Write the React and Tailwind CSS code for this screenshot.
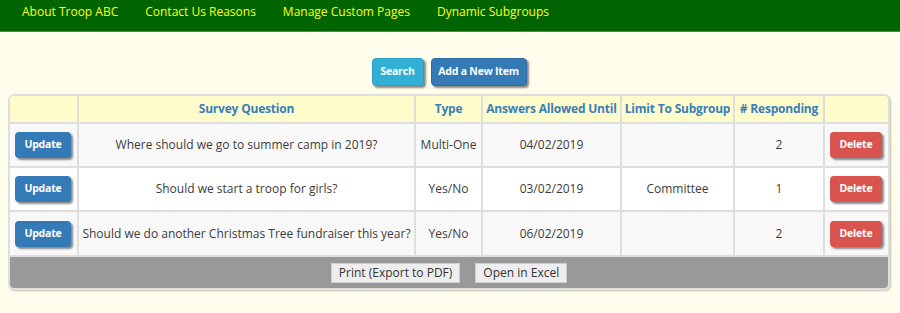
import React from "react";

const navLinks = ["About Troop ABC", "Contact Us Reasons", "Manage Custom Pages", "Dynamic Subgroups"];

const surveys = [
  { id: 1, question: "Where should we go to summer camp in 2019?", type: "Multi-One", until: "04/02/2019", subgroup: "", responding: 2 },
  { id: 2, question: "Should we start a troop for girls?", type: "Yes/No", until: "03/02/2019", subgroup: "Committee", responding: 1 },
  { id: 3, question: "Should we do another Christmas Tree fundraiser this year?", type: "Yes/No", until: "06/02/2019", subgroup: "", responding: 2 },
];

const font = { fontFamily: '"Open Sans", "Noto Sans", sans-serif' };

function SmallButton({ color, children, className = "" }) {
  return (
    <button
      className={`whitespace-nowrap rounded-[4px] px-1 text-[10.5px] font-bold tracking-[-0.2px] text-white shadow-[2px_2px_2px_rgba(0,0,0,0.45)] ${color} ${className}`}
    >
      {children}
    </button>
  );
}

export default function App() {
  return (
    <div className="min-h-[313px] bg-[#fffeec] text-[12px] text-[#3c3c3c]" style={font}>
      <nav className="flex h-[32px] items-center gap-[27px] border-b border-[#4f8f3f] bg-[#006400] pb-[7px] pl-[22px]">
        {navLinks.map((l) => (
          <a key={l} href="#" className="text-[12px] text-[#ffff1a]">
            {l}
          </a>
        ))}
      </nav>

      <div className="flex justify-center gap-[7px] pr-[2px] pt-[26px]">
        <SmallButton color="bg-[#31b0d5] border border-[#2aa0c4]" className="h-[28px] w-[52px]">Search</SmallButton>
        <SmallButton color="bg-[#337ab7] border border-[#2e6da4]" className="h-[28px] w-[96px]">Add a New Item</SmallButton>
      </div>

      <div className="mx-[8px] mt-[8px] w-[882px] overflow-hidden rounded-[6px] border-2 border-[#dedede] shadow-[1px_1px_2px_rgba(0,0,0,0.25)]">
        <table className="w-full table-fixed border-collapse">
          <colgroup>
            <col className="w-[68px]" />
            <col className="w-[337px]" />
            <col className="w-[67px]" />
            <col className="w-[139px]" />
            <col className="w-[113px]" />
            <col className="w-[90px]" />
            <col />
          </colgroup>
          <thead>
            <tr className="h-[27px] whitespace-nowrap bg-[#fffccc] text-[12px] font-semibold tracking-[-0.2px] text-[#3a7dbb]">
              <th className="border-r-2 border-[#dedede]"></th>
              <th className="border-r-2 border-[#dedede]">Survey Question</th>
              <th className="border-r-2 border-[#dedede]">Type</th>
              <th className="border-r-2 border-[#dedede]">Answers Allowed Until</th>
              <th className="border-r-2 border-[#dedede]">Limit To Subgroup</th>
              <th className="border-r-2 border-[#dedede]"># Responding</th>
              <th></th>
            </tr>
          </thead>
          <tbody>
            {surveys.map((s, i) => (
              <tr key={s.id} className={`h-[44px] border-t-2 border-[#dedede] text-center ${i % 2 === 0 ? "bg-[#f8f8f8]" : "bg-white"}`}>
                <td className="border-r-2 border-[#dedede] pl-[5px] text-left">
                  <SmallButton color="bg-[#337ab7]" className="h-[26px] w-[56px]">Update</SmallButton>
                </td>
                <td className="whitespace-nowrap border-r-2 border-[#dedede]">{s.question}</td>
                <td className="border-r-2 border-[#dedede]">{s.type}</td>
                <td className="border-r-2 border-[#dedede]">{s.until}</td>
                <td className="border-r-2 border-[#dedede]">{s.subgroup}</td>
                <td className="border-r-2 border-[#dedede]">{s.responding}</td>
                <td className="pl-[5px] text-left">
                  <SmallButton color="bg-[#d9534f]" className="h-[26px] w-[52px]">Delete</SmallButton>
                </td>
              </tr>
            ))}
          </tbody>
        </table>
        <div className="flex h-[33px] items-center justify-center gap-[15px] border-t-2 border-[#dedede] bg-[#999999]">
          <button className="h-[20px] border border-[#cfcfcf] bg-[#eeeeee] px-[7px] text-[12px] text-[#333]">Print (Export to PDF)</button>
          <button className="h-[20px] border border-[#cfcfcf] bg-[#eeeeee] px-[7px] text-[12px] text-[#333]">Open in Excel</button>
        </div>
      </div>
    </div>
  );
}
